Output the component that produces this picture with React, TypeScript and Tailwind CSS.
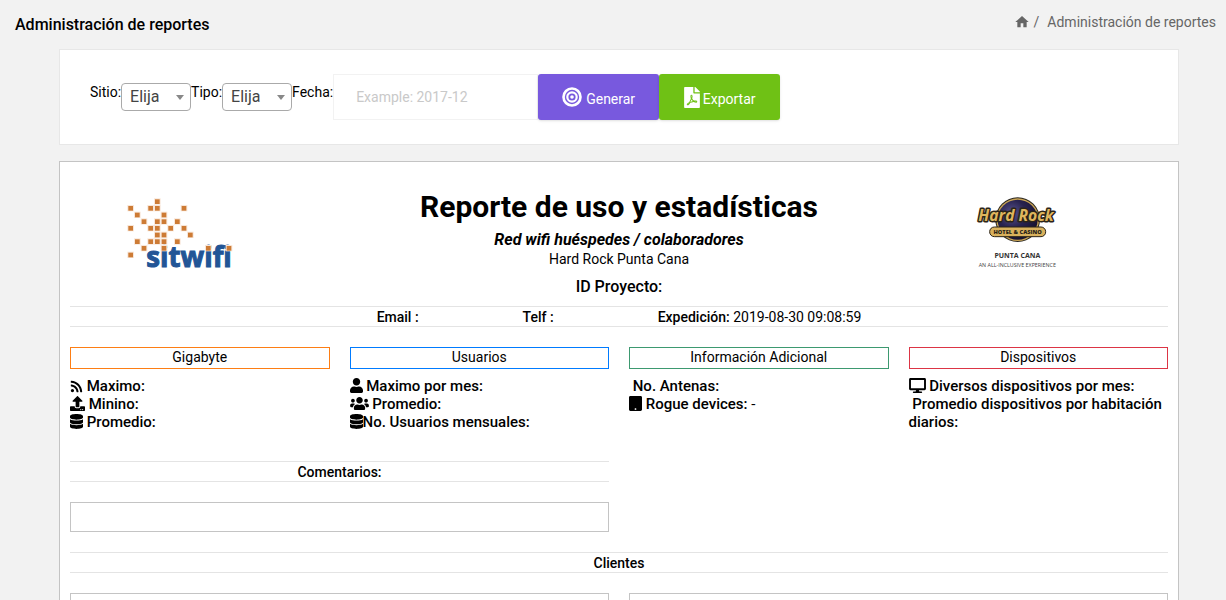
import type { ReactNode } from "react";
import {
  FaDatabase,
  FaDesktop,
  FaFilePdf,
  FaRss,
  FaTablet,
  FaUpload,
  FaUser,
  FaUsers,
} from "react-icons/fa";
import { MdHome } from "react-icons/md";

const squares: [number, number][] = [
  [142, 50],
  [62, 70], [122, 70], [142, 70], [222, 70],
  [82, 90], [162, 90],
  [102, 110], [142, 110], [162, 110], [202, 110],
  [62, 130], [122, 130], [142, 130], [182, 130], [222, 130],
  [142, 150], [162, 150], [241, 150],
  [82, 170], [122, 170], [142, 170], [162, 170], [202, 170],
  [102, 190], [162, 190], [295, 190], [357, 190],
  [62, 210],
];

function SitwifiLogo() {
  return (
    <svg viewBox="51 36 324 237" className="h-[79px] w-[108px]" role="img" aria-label="sitwifi">
      <text
        x="109"
        y="245"
        fontSize="83"
        fontWeight="700"
        fill="#225596"
        stroke="#225596"
        strokeWidth="3"
        fontFamily="'Open Sans', sans-serif"
        style={{ fontVariantLigatures: "none" }}
      >
        sitwifi
      </text>
      {squares.map(([x, y]) => (
        <g key={`${x}-${y}`}>
          <rect x={x - 10} y={y - 10} width="20" height="19" fill="#f8e6d8" />
          <rect x={x - 7} y={y - 7} width="14" height="14" fill="#cd7b35" />
        </g>
      ))}
    </svg>
  );
}

function HardRockLogo() {
  return (
    <svg viewBox="48 38 243 216" className="h-[72px] w-[81px]" role="img" aria-label="Hard Rock Hotel & Casino Punta Cana">
      <defs>
        <radialGradient id="globe" cx="0.35" cy="0.35" r="0.7">
          <stop offset="0" stopColor="#5a5490" />
          <stop offset="0.5" stopColor="#29234f" />
          <stop offset="1" stopColor="#17122f" />
        </radialGradient>
      </defs>
      <circle cx="173" cy="106" r="67" fill="#2b2721" />
      <circle cx="173" cy="106" r="64" fill="#c9a455" />
      <circle cx="173" cy="106" r="60" fill="url(#globe)" />
      <text
        x="168"
        y="111"
        textAnchor="middle"
        fontSize="47"
        fontWeight="700"
        fontStyle="italic"
        fill="#dfb65d"
        stroke="#2b2418"
        strokeWidth="9"
        strokeLinejoin="round"
        paintOrder="stroke"
        fontFamily="'Open Sans', sans-serif"
      >
        Hard Rock
      </text>
      <rect x="89" y="128" width="168" height="29" rx="14" fill="#d9b15c" stroke="#2b2418" strokeWidth="3" />
      <text x="173" y="149" textAnchor="middle" fontSize="17" fontWeight="800" fill="#2b2418" fontFamily="'Open Sans', sans-serif">
        HOTEL &amp; CASINO
      </text>
      <text x="172" y="221" textAnchor="middle" fontSize="21" fontWeight="700" fill="#333" fontFamily="'Open Sans', sans-serif">
        PUNTA CANA
      </text>
      <text x="172" y="249" textAnchor="middle" fontSize="16" fill="#444" fontFamily="'Open Sans', sans-serif">
        AN ALL-INCLUSIVE EXPERIENCE
      </text>
    </svg>
  );
}

function TargetIcon() {
  return (
    <svg viewBox="0 0 20 20" className="size-5" fill="none" stroke="currentColor" aria-hidden="true">
      <circle cx="10" cy="10" r="8.5" strokeWidth="2.6" />
      <circle cx="10" cy="10" r="4.7" strokeWidth="2.2" />
      <circle cx="10" cy="10" r="1.8" fill="currentColor" stroke="none" />
    </svg>
  );
}

function Picker({ id, label }: { id: string; label: string }) {
  return (
    <>
      <label htmlFor={id} className="pt-2 leading-5">
        {label}
      </label>
      <div className="relative mt-[9px]">
        <select
          id={id}
          className="block h-7 w-[70px] appearance-none rounded-sm border border-[#aaa] bg-white pr-5 pl-2 text-base leading-6 text-[#444]"
        >
          <option>Elija</option>
        </select>
        <svg viewBox="0 0 8 5" className="pointer-events-none absolute top-3 right-[7px] h-[5px] w-2" aria-hidden="true">
          <path d="M0 0h8L4 5z" fill="#888" />
        </svg>
      </div>
    </>
  );
}

function Ruled({ children }: { children: ReactNode }) {
  return (
    <div className="flex h-[21px] items-center justify-center gap-[104px] border-y border-[#e4e4e4] leading-5">
      {children}
    </div>
  );
}

function Stat({ icon, children }: { icon?: ReactNode; children: ReactNode }) {
  return (
    <li>
      {icon}
      {children}
    </li>
  );
}

function Group({ title, border, children }: { title: string; border: string; children: ReactNode }) {
  return (
    <section>
      <h3 className={`mb-2 h-[22px] border text-center leading-[18px] ${border}`}>{title}</h3>
      <ul className="text-[15px] leading-[18px] font-medium [&_svg]:inline [&_svg]:align-[-2px]">{children}</ul>
    </section>
  );
}

export default function App() {
  return (
    <div className="h-screen overflow-y-auto bg-[#f2f2f2] font-['Roboto',sans-serif] text-sm text-black [scrollbar-width:none]">
      <header className="flex h-[49px] items-center justify-between pr-[10px] pl-[15px]">
        <h1 className="text-base font-medium">Administración de reportes</h1>
        <nav className="flex items-center pb-1.5 text-[#666]" aria-label="Ruta">
          <a href="#inicio" aria-label="Inicio">
            <MdHome className="size-4" />
          </a>
          <span className="mr-2 ml-1">/</span>
          <span>Administración de reportes</span>
        </nav>
      </header>

      <main className="pr-[47px] pb-4 pl-[59px]">
        <form className="flex items-start border border-[#e7e7e7] bg-white px-[30px] py-6" onSubmit={(e) => e.preventDefault()}>
          <Picker id="sitio" label="Sitio:" />
          <Picker id="tipo" label="Tipo:" />
          <label htmlFor="fecha" className="pt-2 leading-5">
            Fecha:
          </label>
          <input
            id="fecha"
            type="text"
            placeholder="Example: 2017-12"
            className="h-[46px] w-[205px] border border-[#f2f2f2] px-[22px] placeholder:text-[#c9c9c9]"
          />
          <button type="submit" className="flex h-[46px] w-[121px] items-center justify-center gap-1 rounded-[3px] bg-[#7859de] text-white shadow-sm">
            <TargetIcon />
            <span className="pt-1">Generar</span>
          </button>
          <button type="button" className="flex h-[46px] w-[121px] items-center justify-center gap-[3px] rounded-[3px] bg-[#6fc115] text-white shadow-sm">
            <FaFilePdf className="h-[21px] w-4" />
            <span className="pt-1">Exportar</span>
          </button>
        </form>

        <article className="mt-4 border border-[#c4c4c4] bg-white px-[10px] pt-[27px] pb-5">
          <div className="grid grid-cols-[1fr_2fr_1fr]">
            <div className="pt-2 pl-[57px]">
              <SitwifiLogo />
            </div>
            <div className="text-center">
              <h2 className="text-[30px] leading-9 font-bold">Reporte de uso y estadísticas</h2>
              <p className="mt-1 text-base leading-[22px] font-bold italic">Red wifi huéspedes / colaboradores</p>
              <p className="leading-4">Hard Rock Punta Cana</p>
              <p className="mt-2 text-base leading-6 font-medium">ID Proyecto:</p>
            </div>
            <div className="pt-2 pl-[82px]">
              <HardRockLogo />
            </div>
          </div>

          <div className="mt-[7px]">
            <Ruled>
              <b className="font-medium">Email :</b>
              <b className="font-medium">Telf :</b>
              <span>
                <b className="font-medium">Expedición:</b> 2019-08-30 09:08:59
              </span>
            </Ruled>
          </div>

          <div className="mt-5 grid grid-cols-4 gap-5">
            <Group title="Gigabyte" border="border-[#fd7e14]">
              <Stat icon={<FaRss className="size-[13px]" />}> Maximo:</Stat>
              <Stat icon={<FaUpload className="size-[15px]" />}> Minino:</Stat>
              <Stat icon={<FaDatabase className="h-[15px] w-[13px]" />}> Promedio:</Stat>
            </Group>
            <Group title="Usuarios" border="border-[#007bff]">
              <Stat icon={<FaUser className="h-[15px] w-[13px]" />}> Maximo por mes:</Stat>
              <Stat icon={<FaUsers className="h-[15px] w-[19px]" />}> Promedio:</Stat>
              <Stat icon={<FaDatabase className="h-[15px] w-[13px]" />}>No. Usuarios mensuales:</Stat>
            </Group>
            <Group title="Información Adicional" border="border-[#3d9970]">
              <Stat>&nbsp;No. Antenas:</Stat>
              <Stat icon={<FaTablet className="h-[15px] w-[13px]" />}>
                {" "}
                Rogue devices: <span className="font-normal">-</span>
              </Stat>
            </Group>
            <Group title="Dispositivos" border="border-[#dc3545]">
              <Stat icon={<FaDesktop className="h-[15px] w-[17px]" />}> Diversos dispositivos por mes:</Stat>
              <Stat>&nbsp;Promedio dispositivos por habitación diarios:</Stat>
            </Group>
          </div>

          <div className="mt-[30px] grid grid-cols-2 gap-5">
            <section>
              <Ruled>
                <h3 className="font-medium">Comentarios:</h3>
              </Ruled>
              <div className="mt-5 h-[30px] border border-[#c4c4c4]" />
            </section>
          </div>

          <section className="mt-5">
            <Ruled>
              <h3 className="font-medium">Clientes</h3>
            </Ruled>
            <div className="mt-5 grid grid-cols-2 gap-5">
              <div className="h-60 border border-[#c4c4c4]" />
              <div className="h-60 border border-[#c4c4c4]" />
            </div>
          </section>
        </article>
      </main>
    </div>
  );
}
